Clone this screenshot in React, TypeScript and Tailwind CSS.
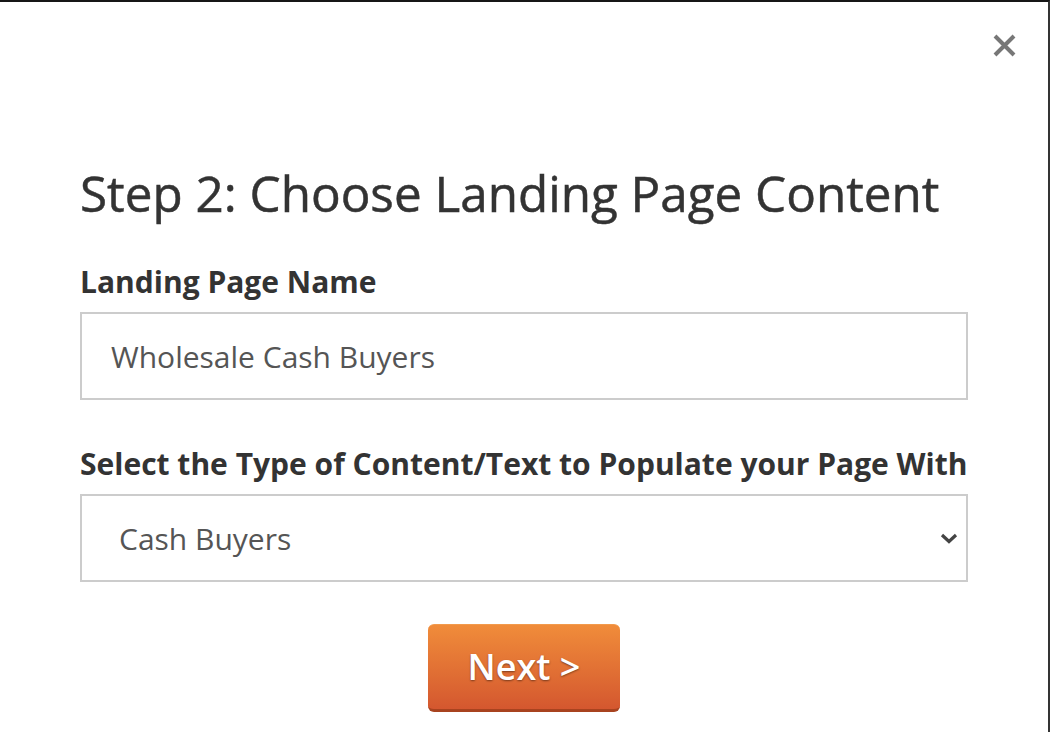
import React from 'react';

const App: React.FC = () => {
  return (
    <div
      className="relative w-[1050px] h-[732px] overflow-hidden bg-white border-t-2 border-r-2 border-t-[#161616] border-r-[#343434]"
      style={{ fontFamily: '"Open Sans", "Noto Sans", sans-serif' }}
    >
      {/* lighter notch in the top edge */}
      <div className="absolute -top-[2px] left-[246px] w-[30px] h-[2px] bg-[#3a3a3a]" />

      <button className="absolute top-[30px] right-[31px] w-[26px] h-[26px] flex items-center justify-center" aria-label="Close">
        <svg width="23" height="23" viewBox="0 0 23 23">
          <path d="M2 2 L21 21 M21 2 L2 21" stroke="#777" strokeWidth="4" strokeLinecap="butt" />
        </svg>
      </button>

      <div className="pl-[80px] pr-[80px] pt-[161px]">
        <h2 className="text-[49.4px] leading-[60px] text-[#333] font-normal [-webkit-text-stroke:0.5px_#333]">
          Step 2: Choose Landing Page Content
        </h2>

        <label className="block mt-[41px] text-[30px] leading-[36px] font-bold text-[#333]">Landing Page Name</label>
        <div className="mt-[12px] w-[888px] h-[88px] border-2 border-[#cccccc] flex items-center pl-[29px]">
          <span className="text-[30px] text-[#555]">Wholesale Cash Buyers</span>
        </div>

        <label className="block mt-[46px] text-[30px] leading-[36px] font-bold text-[#333]">
          Select the Type of Content/Text to Populate your Page With
        </label>
        <div className="mt-[12px] w-[888px] h-[88px] border-2 border-[#cccccc] flex items-center justify-between pl-[37px] pr-[8px]">
          <span className="text-[30px] text-[#555]">Cash Buyers</span>
          <svg width="18" height="12" viewBox="0 0 18 12">
            <path d="M2 3 L9 9.5 L16 3" fill="none" stroke="#444" strokeWidth="3.2" />
          </svg>
        </div>

        <div className="flex justify-center w-[888px] mt-[42px]">
          <button className="w-[192px] h-[88px] rounded-[6px] bg-gradient-to-b from-[#f08c3a] to-[#d4572f] border-t border-t-[#f29a4c] border-b-[3px] border-b-[#a8431f] text-white text-[36px] font-semibold [text-shadow:0_1px_2px_rgba(0,0,0,0.45)]">
            Next &gt;
          </button>
        </div>
      </div>
    </div>
  );
};

export default App;
